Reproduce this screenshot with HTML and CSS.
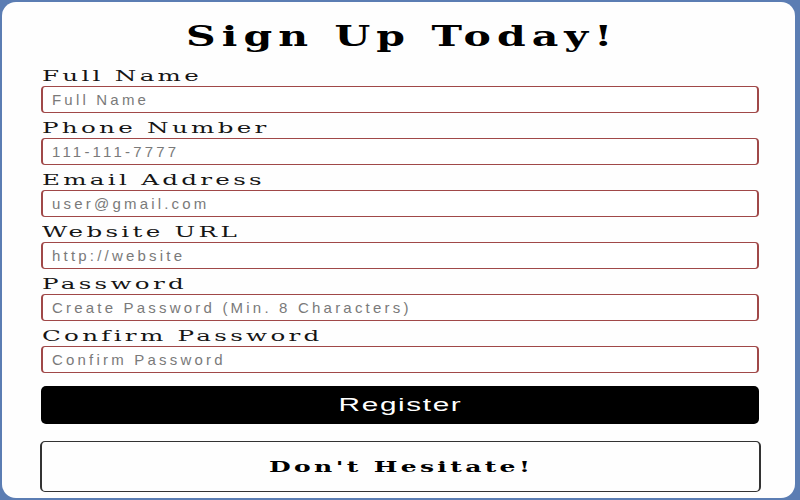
FILE: index.html
```html
<!DOCTYPE html>
<html>
<head>
<meta charset="utf-8">
<link rel="stylesheet" href="styles.css">
</head>
<body>
<div class="card">
  <h1 class="title"><span class="wide title-text">Sign Up Today!</span></h1>
  <form class="form">
    <label class="field"><span class="label"><span class="wide label-text">Full Name</span></span><input class="input" type="text" placeholder="Full Name"></label>
    <label class="field"><span class="label"><span class="wide label-text">Phone Number</span></span><input class="input" type="text" placeholder="111-111-7777"></label>
    <label class="field"><span class="label"><span class="wide label-text">Email Address</span></span><input class="input" type="text" placeholder="user@gmail.com"></label>
    <label class="field"><span class="label"><span class="wide label-text">Website URL</span></span><input class="input" type="text" placeholder="http://website"></label>
    <label class="field"><span class="label"><span class="wide label-text">Password</span></span><input class="input" type="text" placeholder="Create Password (Min. 8 Characters)"></label>
    <label class="field"><span class="label"><span class="wide label-text">Confirm Password</span></span><input class="input" type="text" placeholder="Confirm Password"></label>
    <button class="register" type="button"><span class="wide register-text">Register</span></button>
    <div class="hesitate"><span class="wide hesitate-text">Don't Hesitate!</span></div>
  </form>
</div>
</body>
</html>
```
FILE: styles.css
```css
html, body {
  margin: 0;
  padding: 0;
  height: 100%;
}
body {
  background: #5b7db3;
  padding: 2px 5px 2px 2px;
  box-sizing: border-box;
  overflow: hidden;
}
.card {
  background: #fefefe;
  border-radius: 14px;
  height: 100%;
  box-sizing: border-box;
  padding: 10px 36px 0 39px;
}
.wide {
  display: inline-block;
  white-space: nowrap;
}
.title {
  margin: 0;
  text-align: center;
  font-family: "DejaVu Serif", serif;
  font-weight: bold;
  font-size: 27px;
  line-height: 49px;
  color: #000;
}
.title-text {
  letter-spacing: 4px;
  margin-right: -4px;
  transform: scaleX(1.52);
}
.form {
  display: flex;
  flex-direction: column;
}
.field {
  display: flex;
  flex-direction: column;
}
.label {
  display: block;
  box-sizing: border-box;
  height: 25px;
  padding: 5px 0 0 1px;
  font-family: "DejaVu Serif", serif;
  font-size: 15px;
  line-height: 20px;
  color: #151515;
}
.label-text {
  letter-spacing: 2px;
  transform: scaleX(1.64);
  transform-origin: left center;
}
.input {
  height: 27px;
  box-sizing: border-box;
  border: 1.5px solid #a04848;
  border-left-width: 2px;
  border-right-width: 2px;
  border-radius: 4px;
  padding: 0 9px;
  font-family: "Liberation Sans", Arial, sans-serif;
  font-size: 15px;
  letter-spacing: 3.2px;
  outline: none;
  background: #fff;
}
.input::placeholder {
  color: #7a7a7a;
}
.register {
  margin-top: 13px;
  height: 38px;
  padding: 0;
  background: #000;
  color: #fff;
  border: none;
  border-radius: 5px;
  font-family: "Liberation Sans", Arial, sans-serif;
  font-size: 18px;
}
.register-text {
  letter-spacing: 1px;
  margin-right: -1px;
  transform: scaleX(1.65);
}
.hesitate {
  margin-top: 17px;
  margin-left: -1px;
  margin-right: -2px;
  height: 51px;
  box-sizing: border-box;
  border: 1.5px solid #333;
  border-left-width: 2px;
  border-right-width: 2px;
  border-radius: 5px;
  display: flex;
  align-items: center;
  justify-content: center;
  font-family: "DejaVu Serif", serif;
  font-weight: bold;
  font-size: 15px;
  color: #000;
}
.hesitate-text {
  letter-spacing: 2px;
  margin-right: -2px;
  transform: scaleX(1.67);
}
```
